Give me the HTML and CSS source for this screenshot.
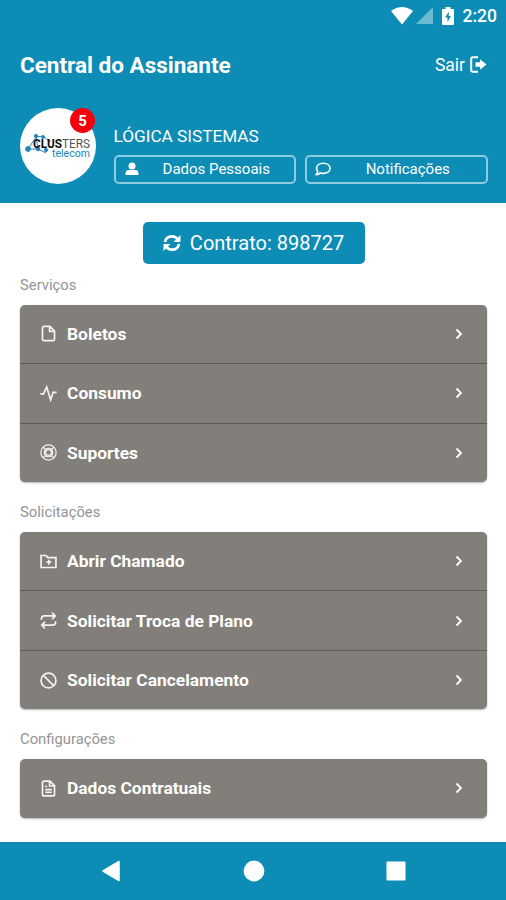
FILE: index.html
```
<!DOCTYPE html>
<html lang="pt-BR">
<head>
    <meta charset="UTF-8">
    <meta name="viewport" content="width=device-width, initial-scale=1.0">
    <title>Central do Assinante</title>
    <link rel="stylesheet" href="styles.css">
</head>
<body>
    <header class="header">
        <div class="status-bar">
            <svg width="22" height="18" viewBox="0 0 22 18"><path d="M0 4Q11-4 22 4L11 17.5z" fill="#fff"/></svg>
            <svg class="signal" width="17" height="17" viewBox="0 0 17 17"><path d="M17 0v17H0z" fill="#6bb9d3"/></svg>
            <svg class="battery" width="12" height="18" viewBox="0 0 12 18"><path d="M3.5 2V0h5v2H11q1 0 1 1v14q0 1-1 1H1q-1 0-1-1V3q0-1 1-1z" fill="#fff"/><path d="M7 4.5L3 10.5h2.5V15L9 9H6.6z" fill="#0d8cb5"/></svg>
            <span class="time">2:20</span>
        </div>
        <div class="title-bar">
            <h1>Central do Assinante</h1>
            <a class="logout">Sair
                <svg width="17" height="17" viewBox="0 0 17 17"><path d="M8 1.2H3Q1.2 1.2 1.2 3v11q0 1.8 1.8 1.8h5" fill="none" stroke="#fff" stroke-width="2"/><path d="M5.5 6.3H10V3.2l6.5 5.3-6.5 5.3v-3.1H5.5z" fill="#fff"/></svg>
            </a>
        </div>
        <div class="profile">
            <div class="avatar">
                <svg width="76" height="76" viewBox="0 0 76 76">
                    <g fill="#2384b8" stroke="#2384b8">
                        <path d="M8 41l8-12 7-1 6 5M8 41h10l8 4M16 29l2 12" fill="none" stroke-width="1"/>
                        <circle cx="8" cy="41" r="2.4"/><circle cx="16" cy="28" r="1.6"/><circle cx="23" cy="29" r="1.4"/><circle cx="18" cy="41" r="1.8"/><circle cx="26" cy="42" r="1.6"/><circle cx="29" cy="33" r="1"/>
                    </g>
                    <text class="logo-mark" x="13" y="40" textLength="57" lengthAdjust="spacingAndGlyphs"><tspan class="dark">CLUS</tspan>TERS</text>
                    <text class="logo-sub" x="32" y="49" textLength="38" lengthAdjust="spacingAndGlyphs">telecom</text>
                </svg>
                <span class="badge">5</span>
            </div>
            <div class="profile-info">
                <div class="name">LÓGICA SISTEMAS</div>
                <div class="profile-buttons">
                    <button type="button">
                        <svg width="16" height="16" viewBox="0 0 16 16"><circle cx="8" cy="5" r="3.5" fill="#fff"/><path d="M1.5 14v-1.6Q1.5 9 5 9h6q3.5 0 3.5 3.4V14z" fill="#fff"/></svg>
                        <span>Dados Pessoais</span>
                    </button>
                    <button type="button">
                        <svg width="16" height="16" viewBox="0 0 16 16"><path d="M8.3 2.2c4 0 6.7 2.2 6.7 5.1s-2.7 5.1-6.7 5.1q-1.700 0-3-.5Q3.6 13.6 1 13.6 2.6 12 2.7 10.3 1.6 9 1.6 7.300c0-2.900 2.700-5.100 6.700-5.100z" fill="none" stroke="#fff" stroke-width="1.600" stroke-linejoin="round"/></svg>
                        <span>Notificações</span>
                    </button>
                </div>
            </div>
        </div>
    </header>

    <main class="content">
        <button type="button" class="contract">
            <svg width="18" height="18" viewBox="0 0 18 18"><path d="M2 8Q3 2.3 9 2.3q3.500 0 5.700 3M16 10q-1 5.700-7 5.700-3.500 0-5.700-3" fill="none" stroke="#fff" stroke-width="2.700"/><path d="M17.500 1v7h-7zM.5 17v-7h7z" fill="#fff"/></svg>
            Contrato: 898727
        </button>

        <h2>Serviços</h2>
        <ul class="menu">
            <li>
                <svg class="icon" viewBox="0 0 24 24"><path d="M14 2H5.500Q3.500 2 3.500 4v16q0 2 2 2h13q2 0 2-2V8.500zM13.500 2v7h7"/></svg>
                <span>Boletos</span>
                <svg class="arrow" viewBox="0 0 8 12"><path d="M1.500 1.500L6 6l-4.500 4.500"/></svg>
            </li>
            <li>
                <svg class="icon" viewBox="0 0 24 24"><path d="M.5 12.500H5L9.500 3l5.500 18 3.500-10.500h5"/></svg>
                <span>Consumo</span>
                <svg class="arrow" viewBox="0 0 8 12"><path d="M1.500 1.500L6 6l-4.500 4.500"/></svg>
            </li>
            <li>
                <svg class="icon thin" viewBox="0 0 24 24"><circle cx="12" cy="12" r="10.800"/><circle cx="12" cy="12" r="4"/><path d="M4.400 4.400l4.800 4.800M14.800 14.800l4.800 4.800M19.600 4.400l-4.800 4.800M9.200 14.800l-4.800 4.800M7.500 7.500Q12 4.500 16.500 7.500M7.500 16.500q4.500 3 9 0M7.500 7.500q-3 4.500 0 9M16.500 7.500q3 4.500 0 9"/></svg>
                <span>Suportes</span>
                <svg class="arrow" viewBox="0 0 8 12"><path d="M1.500 1.500L6 6l-4.500 4.500"/></svg>
            </li>
        </ul>

        <h2>Solicitações</h2>
        <ul class="menu">
            <li>
                <svg class="icon" viewBox="0 0 24 24"><path d="M1.500 3.500h7l2.500 3h11.500v14h-21zM12.500 9.500v7M9 13h7"/></svg>
                <span>Abrir Chamado</span>
                <svg class="arrow" viewBox="0 0 8 12"><path d="M1.500 1.500L6 6l-4.500 4.500"/></svg>
            </li>
            <li>
                <svg class="icon" viewBox="0 0 24 24"><path d="M2 11V9.500q0-4 4-4h15M17 1l4.500 4.500-4.500 4.500M22 13v1.500q0 4-4 4H3M7 14l-4.500 4.500L7 23"/></svg>
                <span>Solicitar Troca de Plano</span>
                <svg class="arrow" viewBox="0 0 8 12"><path d="M1.500 1.500L6 6l-4.500 4.500"/></svg>
            </li>
            <li>
                <svg class="icon" viewBox="0 0 24 24"><circle cx="12" cy="12" r="10.500"/><path d="M4.500 4.500l15 15"/></svg>
                <span>Solicitar Cancelamento</span>
                <svg class="arrow" viewBox="0 0 8 12"><path d="M1.500 1.500L6 6l-4.500 4.500"/></svg>
            </li>
        </ul>

        <h2>Configurações</h2>
        <ul class="menu">
            <li>
                <svg class="icon" viewBox="0 0 24 24"><path d="M14 1.500H6Q3.500 1.500 3.500 4v16q0 2.500 2.500 2.500h12q2.500 0 2.500-2.500V8zM13.500 1.500v7h7M7.500 9H10M7.500 13.500h9M7.500 17.500h9"/></svg>
                <span>Dados Contratuais</span>
                <svg class="arrow" viewBox="0 0 8 12"><path d="M1.500 1.500L6 6l-4.500 4.500"/></svg>
            </li>
        </ul>
    </main>

    <nav class="nav-bar">
        <svg width="22" height="22" viewBox="0 0 22 22"><path d="M3 11L19 1.500v19z" fill="#fff" stroke="#fff" stroke-width="1.500" stroke-linejoin="round"/></svg>
        <svg width="22" height="22" viewBox="0 0 22 22"><circle cx="11" cy="11" r="10.400" fill="#fff"/></svg>
        <svg width="22" height="22" viewBox="0 0 22 22"><rect x="1.500" y="1.500" width="19" height="19" rx="1" fill="#fff"/></svg>
    </nav>
</body>
</html>
```
FILE: styles.css
```
* {
    box-sizing: border-box;
}
body {
    margin: 0;
    height: 900px;
    display: flex;
    flex-direction: column;
    font-family: Roboto, sans-serif;
    background-color: #fff;
    color: #fff;
}
svg {
    display: block;
    flex: none;
}
button {
    font-family: inherit;
    color: #fff;
    background-color: #0d8cb5; /* Blue */
}
.header {
    height: 202.5px;
    background-color: #0d8cb5;
}
.status-bar {
    display: flex;
    justify-content: flex-end;
    align-items: center;
    height: 31px;
    padding-right: 9px;
}
.signal {
    margin-left: 3px;
}
.battery {
    margin-left: 9px;
}
.time {
    margin-left: 9px;
    font-size: 17.5px;
    font-weight: 500;
}
.title-bar {
    display: flex;
    justify-content: space-between;
    align-items: center;
    height: 67px;
    padding: 0 19px 0 20px;
}
.title-bar h1 {
    margin: 0;
    font-size: 22.5px;
    font-weight: 700;
}
.logout {
    display: flex;
    align-items: center;
    gap: 5px;
    font-size: 17.5px;
}
.profile {
    display: flex;
    gap: 17.5px;
    padding: 10px 18.5px 0 20px;
}
.avatar {
    position: relative;
    flex: none;
    width: 76px;
    height: 76px;
    border-radius: 50%;
    background-color: #fff;
}
.logo-mark {
    font-size: 13px;
    font-weight: 400;
    fill: #555;
}
.logo-mark .dark {
    font-weight: 700;
    fill: #111;
}
.logo-sub {
    font-size: 10px;
    fill: #2384b8;
}
.badge {
    position: absolute;
    top: 0;
    right: 1px;
    width: 25px;
    height: 25px;
    border-radius: 50%;
    background-color: #f5000c; /* Red */
    font-size: 15px;
    font-weight: 700;
    line-height: 26px;
    text-align: center;
}
.profile-info {
    flex: 1;
}
.name {
    margin-top: 18px;
    font-size: 17.2px;
    line-height: 20px;
}
.profile-buttons {
    display: flex;
    gap: 9px;
    margin-top: 8.5px;
}
.profile-buttons button {
    display: flex;
    align-items: center;
    flex: 1;
    height: 29px;
    padding: 0 8px 0 8px;
    border: 2px solid #8acde2;
    border-radius: 5px;
    font-size: 15px;
}
.profile-buttons span {
    flex: 1;
    padding-left: 7px;
    text-align: center;
}
.content {
    flex: 1;
    padding: 19.5px 19px 0 20px;
}
.contract {
    display: flex;
    justify-content: center;
    align-items: center;
    gap: 9px;
    width: 222px;
    height: 42px;
    margin: 0 auto;
    padding: 0;
    border: none;
    border-radius: 5px;
    font-size: 20px;
}
.content h2 {
    height: 20px;
    margin: 10.5px 0 10px;
    color: #949494;
    font-size: 14.8px;
    font-weight: 400;
    line-height: 20px;
}
.menu {
    margin: 0 0 19.8px;
    padding: 0;
    list-style: none;
    border-radius: 5px;
    background-color: #827e79; /* Warm gray */
    box-shadow: 0 1px 2px rgba(0, 0, 0, 0.3);
}
.menu li {
    display: flex;
    align-items: center;
    height: 58.5px;
    padding: 0 24px 0 20px;
    font-size: 17.4px;
    font-weight: 700;
}
.menu li + li {
    height: 59.5px;
    border-top: 1px solid #5f5b57;
}
.menu span {
    flex: 1;
}
.icon {
    width: 17px;
    height: 17px;
    margin-right: 10px;
    fill: none;
    stroke: #f4f3f2;
    stroke-width: 2.4;
}
.icon.thin {
    stroke-width: 1.7;
}
.arrow {
    width: 8px;
    height: 12px;
    fill: none;
    stroke: #fff;
    stroke-width: 1.8;
}
.nav-bar {
    display: flex;
    justify-content: space-between;
    align-items: center;
    height: 58px;
    padding: 0 99px 0 100px;
    background-color: #0d8cb5;
}
```
